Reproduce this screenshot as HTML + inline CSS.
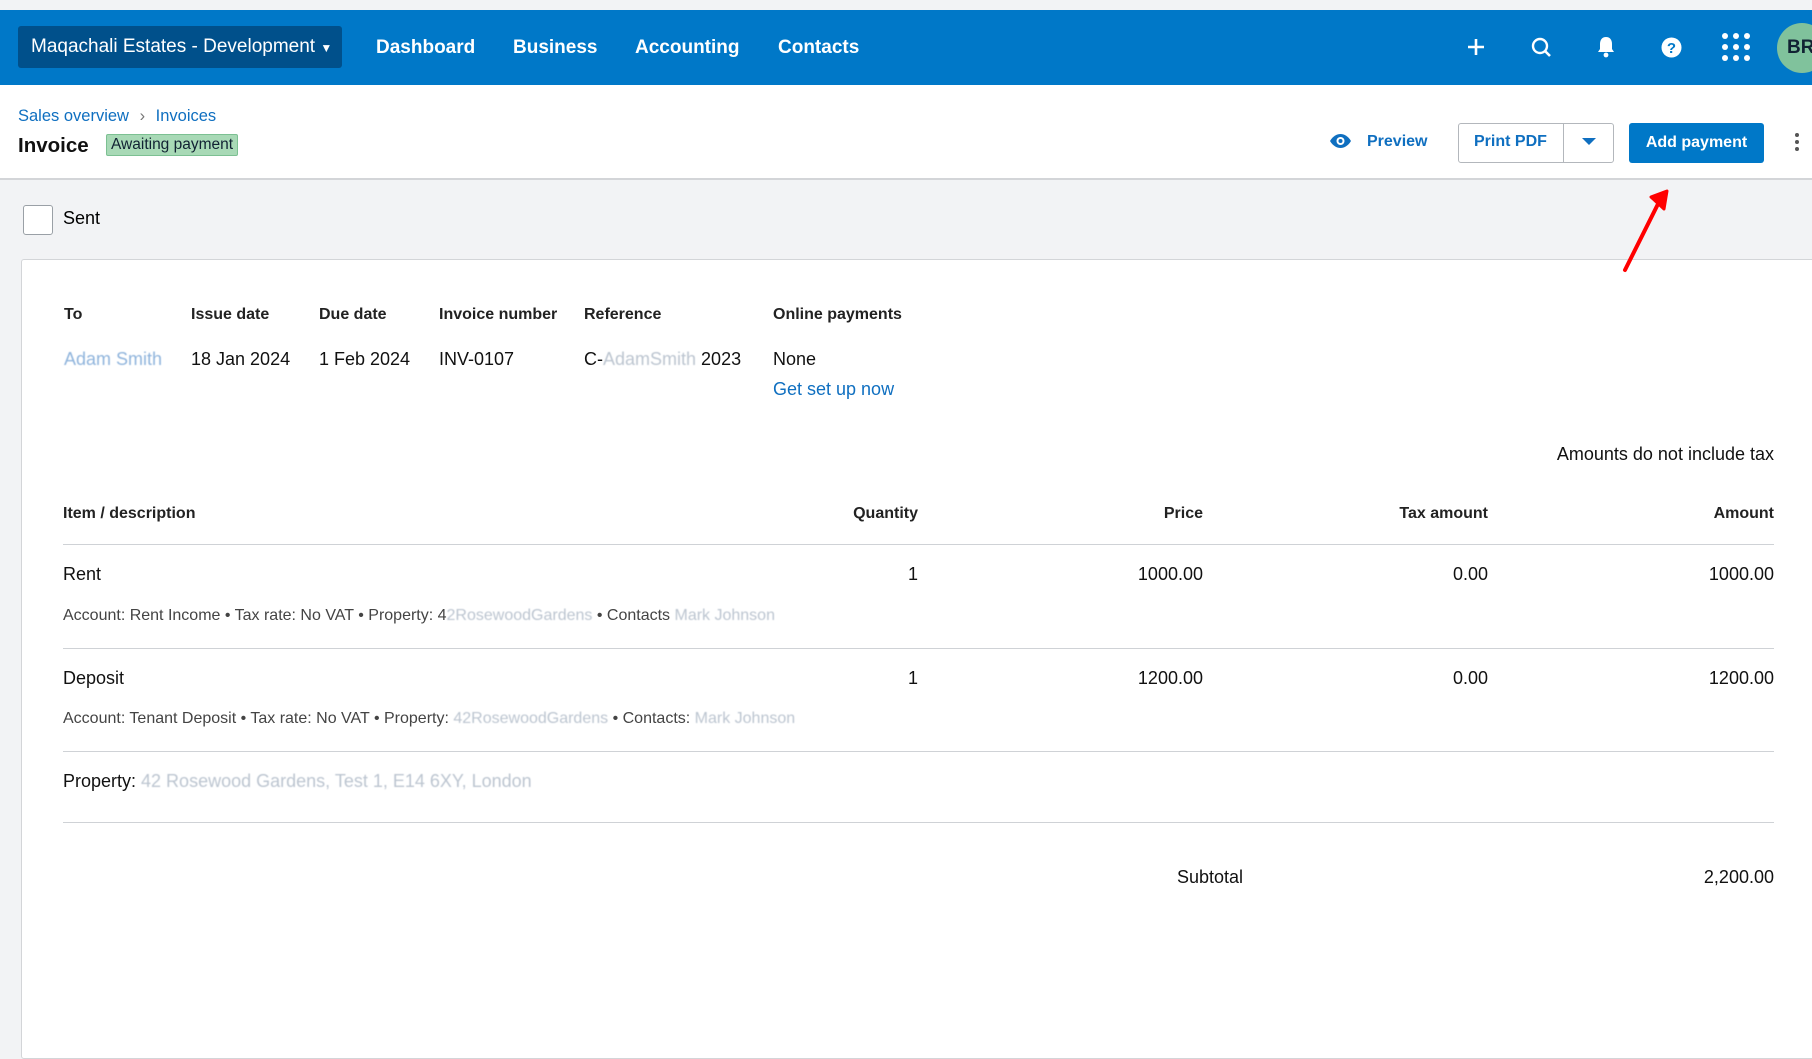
<!DOCTYPE html>
<html><head><meta charset="utf-8"><style>
*{margin:0;padding:0;box-sizing:border-box}
body{width:1812px;height:892px;overflow:hidden;background:#f2f3f5;font-family:"Liberation Sans",Arial,sans-serif;color:#000;position:relative}
.a{position:absolute;white-space:nowrap}
.nav{position:absolute;left:0;top:10px;width:1812px;height:75px;background:#0078c8}
.org{left:18px;top:26px;width:324px;height:42px;background:#00508b;border-radius:3px;color:#fff;font-size:19px;line-height:42px;padding-left:13px}
.nl{color:#fff;font-weight:bold;font-size:19px;top:37px}
.hdr{position:absolute;left:0;top:85px;width:1812px;height:95px;background:#fff;border-bottom:2px solid #d3d5d8}
.bc{color:#0f6fc0;font-size:16.5px;top:107px}
.card{position:absolute;left:21px;top:259px;width:1800px;height:800px;background:#fff;border:1px solid #d3d5d8;border-radius:3px}
.h{font-weight:bold;font-size:16px;color:#222}
.v{font-size:18px;color:#111}
.s{font-size:16px;color:#444}
.blur{color:#bcc5d0;filter:blur(.6px)}
.line{position:absolute;left:63px;width:1711px;height:1px;background:#cfd2d6}
</style></head><body>
<div class="nav"></div>
<div class="a org">Maqachali Estates - Development <span style="font-size:12px">&#9660;</span></div>
<div class="a nl" style="left:376px">Dashboard</div>
<div class="a nl" style="left:513px">Business</div>
<div class="a nl" style="left:635px">Accounting</div>
<div class="a nl" style="left:778px">Contacts</div>
<svg class="a" style="left:1464px;top:35px" width="24" height="24" viewBox="0 0 24 24"><path d="M12 4v16M4 12h16" stroke="#fff" stroke-width="2.6"/></svg>
<svg class="a" style="left:1530px;top:36px" width="24" height="24" viewBox="0 0 24 24"><circle cx="10" cy="10" r="7" fill="none" stroke="#fff" stroke-width="2.4"/><path d="M15 15l5 5" stroke="#fff" stroke-width="2.6"/></svg>
<svg class="a" style="left:1596px;top:36px" width="20" height="22" viewBox="0 0 20 22"><path d="M10 1c-4 0-6 3-6 7v5l-2 3h16l-2-3V8c0-4-2-7-6-7z" fill="#fff"/><circle cx="10" cy="19" r="2.4" fill="#fff"/></svg>
<svg class="a" style="left:1661px;top:37px" width="21" height="21" viewBox="0 0 21 21"><circle cx="10.5" cy="10.5" r="10" fill="#fff"/><text x="10.5" y="16" text-anchor="middle" font-family="Liberation Sans" font-weight="bold" font-size="15" fill="#0078c8">?</text></svg>
<svg class="a" style="left:1722px;top:33px" width="28" height="28" viewBox="0 0 28 28" fill="#fff"><circle cx="3" cy="3" r="3"/><circle cx="14" cy="3" r="3"/><circle cx="25" cy="3" r="3"/><circle cx="3" cy="14" r="3"/><circle cx="14" cy="14" r="3"/><circle cx="25" cy="14" r="3"/><circle cx="3" cy="25" r="3"/><circle cx="14" cy="25" r="3"/><circle cx="25" cy="25" r="3"/></svg>
<div class="a" style="left:1777px;top:23px;width:50px;height:50px;border-radius:50%;background:#80c29c;color:#123;font-weight:bold;font-size:19px;line-height:50px;padding-left:10px">BR</div>

<div class="hdr"></div>
<div class="a bc" style="left:18px">Sales overview <span style="color:#777;margin:0 6px">›</span> Invoices</div>
<div class="a" style="left:18px;top:134px;font-weight:bold;font-size:20.5px;color:#111">Invoice</div>
<div class="a" style="left:106px;top:134px;background:#a8d9b6;border:1px solid #7cc092;border-radius:2px;font-size:15.5px;padding:1px 4px;color:#123">Awaiting payment</div>
<svg class="a" style="left:1329px;top:133px" width="23" height="16" viewBox="0 0 23 16"><path d="M1 8C4 3 8 1 11.5 1S19 3 22 8c-3 5-7 7-10.5 7S4 13 1 8z" fill="#0f6fc0"/><circle cx="11.5" cy="8" r="4" fill="#fff"/><circle cx="11.5" cy="8" r="2" fill="#0f6fc0"/></svg>
<div class="a" style="left:1367px;top:133px;font-weight:bold;font-size:16px;color:#0f6fc0">Preview</div>
<div class="a" style="left:1458px;top:123px;width:156px;height:40px;border:1px solid #b3b7bc;border-radius:3px;background:#fff"></div>
<div class="a" style="left:1563px;top:123px;width:1px;height:40px;background:#b3b7bc"></div>
<div class="a" style="left:1474px;top:133px;font-weight:bold;font-size:16px;color:#0f6fc0">Print PDF</div>
<svg class="a" style="left:1582px;top:138px" width="14" height="8"><path d="M0 0h14L7 7z" fill="#0f6fc0"/></svg>
<div class="a" style="left:1629px;top:123px;width:135px;height:40px;background:#0078c8;border-radius:3px;color:#fff;font-weight:bold;font-size:16px;line-height:40px;text-align:center">Add payment</div>
<svg class="a" style="left:1794px;top:132px" width="6" height="20" fill="#555"><circle cx="3" cy="3" r="2"/><circle cx="3" cy="10" r="2"/><circle cx="3" cy="17" r="2"/></svg>

<div class="a" style="left:23px;top:205px;width:30px;height:30px;border:1px solid #9aa0a6;border-radius:3px;background:#fff"></div>
<div class="a" style="left:63px;top:208px;font-size:18px">Sent</div>

<div class="card"></div>
<svg class="a" style="left:1615px;top:185px" width="60" height="95"><path d="M10 85L45 15" stroke="#f00" stroke-width="4" stroke-linecap="round"/><path d="M36 12L52 6L49 24z" fill="#f00" stroke="#f00" stroke-width="3" stroke-linejoin="round"/></svg>

<div class="a h" style="left:64px;top:306px">To</div>
<div class="a h" style="left:191px;top:306px">Issue date</div>
<div class="a h" style="left:319px;top:306px">Due date</div>
<div class="a h" style="left:439px;top:306px">Invoice number</div>
<div class="a h" style="left:584px;top:306px">Reference</div>
<div class="a h" style="left:773px;top:306px">Online payments</div>
<div class="a v blur" style="left:64px;top:349px;color:#8fb4dc">Adam Smith</div>
<div class="a v" style="left:191px;top:349px">18 Jan 2024</div>
<div class="a v" style="left:319px;top:349px">1 Feb 2024</div>
<div class="a v" style="left:439px;top:349px">INV-0107</div>
<div class="a v" style="left:584px;top:349px">C-<span class="blur">AdamSmith</span> 2023</div>
<div class="a v" style="left:773px;top:349px">None</div>
<div class="a v" style="left:773px;top:379px;color:#0f6fc0">Get set up now</div>
<div class="a v" style="right:38px;top:444px">Amounts do not include tax</div>

<div class="a h" style="left:63px;top:505px">Item / description</div>
<div class="a h" style="right:894px;top:505px">Quantity</div>
<div class="a h" style="right:609px;top:505px">Price</div>
<div class="a h" style="right:324px;top:505px">Tax amount</div>
<div class="a h" style="right:38px;top:505px">Amount</div>
<div class="line" style="top:544px"></div>
<div class="a v" style="left:63px;top:564px">Rent</div>
<div class="a v" style="right:894px;top:564px">1</div>
<div class="a v" style="right:609px;top:564px">1000.00</div>
<div class="a v" style="right:324px;top:564px">0.00</div>
<div class="a v" style="right:38px;top:564px">1000.00</div>
<div class="a s" style="left:63px;top:607px">Account: Rent Income • Tax rate: No VAT • Property: 4<span class="blur">2RosewoodGardens</span> • Contacts <span class="blur">Mark Johnson</span></div>
<div class="line" style="top:648px"></div>
<div class="a v" style="left:63px;top:668px">Deposit</div>
<div class="a v" style="right:894px;top:668px">1</div>
<div class="a v" style="right:609px;top:668px">1200.00</div>
<div class="a v" style="right:324px;top:668px">0.00</div>
<div class="a v" style="right:38px;top:668px">1200.00</div>
<div class="a s" style="left:63px;top:710px">Account: Tenant Deposit • Tax rate: No VAT • Property: <span class="blur">42RosewoodGardens</span> • Contacts: <span class="blur">Mark Johnson</span></div>
<div class="line" style="top:751px"></div>
<div class="a v" style="left:63px;top:771px">Property: <span class="blur">42 Rosewood Gardens, Test 1, E14 6XY, London</span></div>
<div class="line" style="top:822px"></div>
<div class="a v" style="right:569px;top:867px">Subtotal</div>
<div class="a v" style="right:38px;top:867px">2,200.00</div>
</body></html>
